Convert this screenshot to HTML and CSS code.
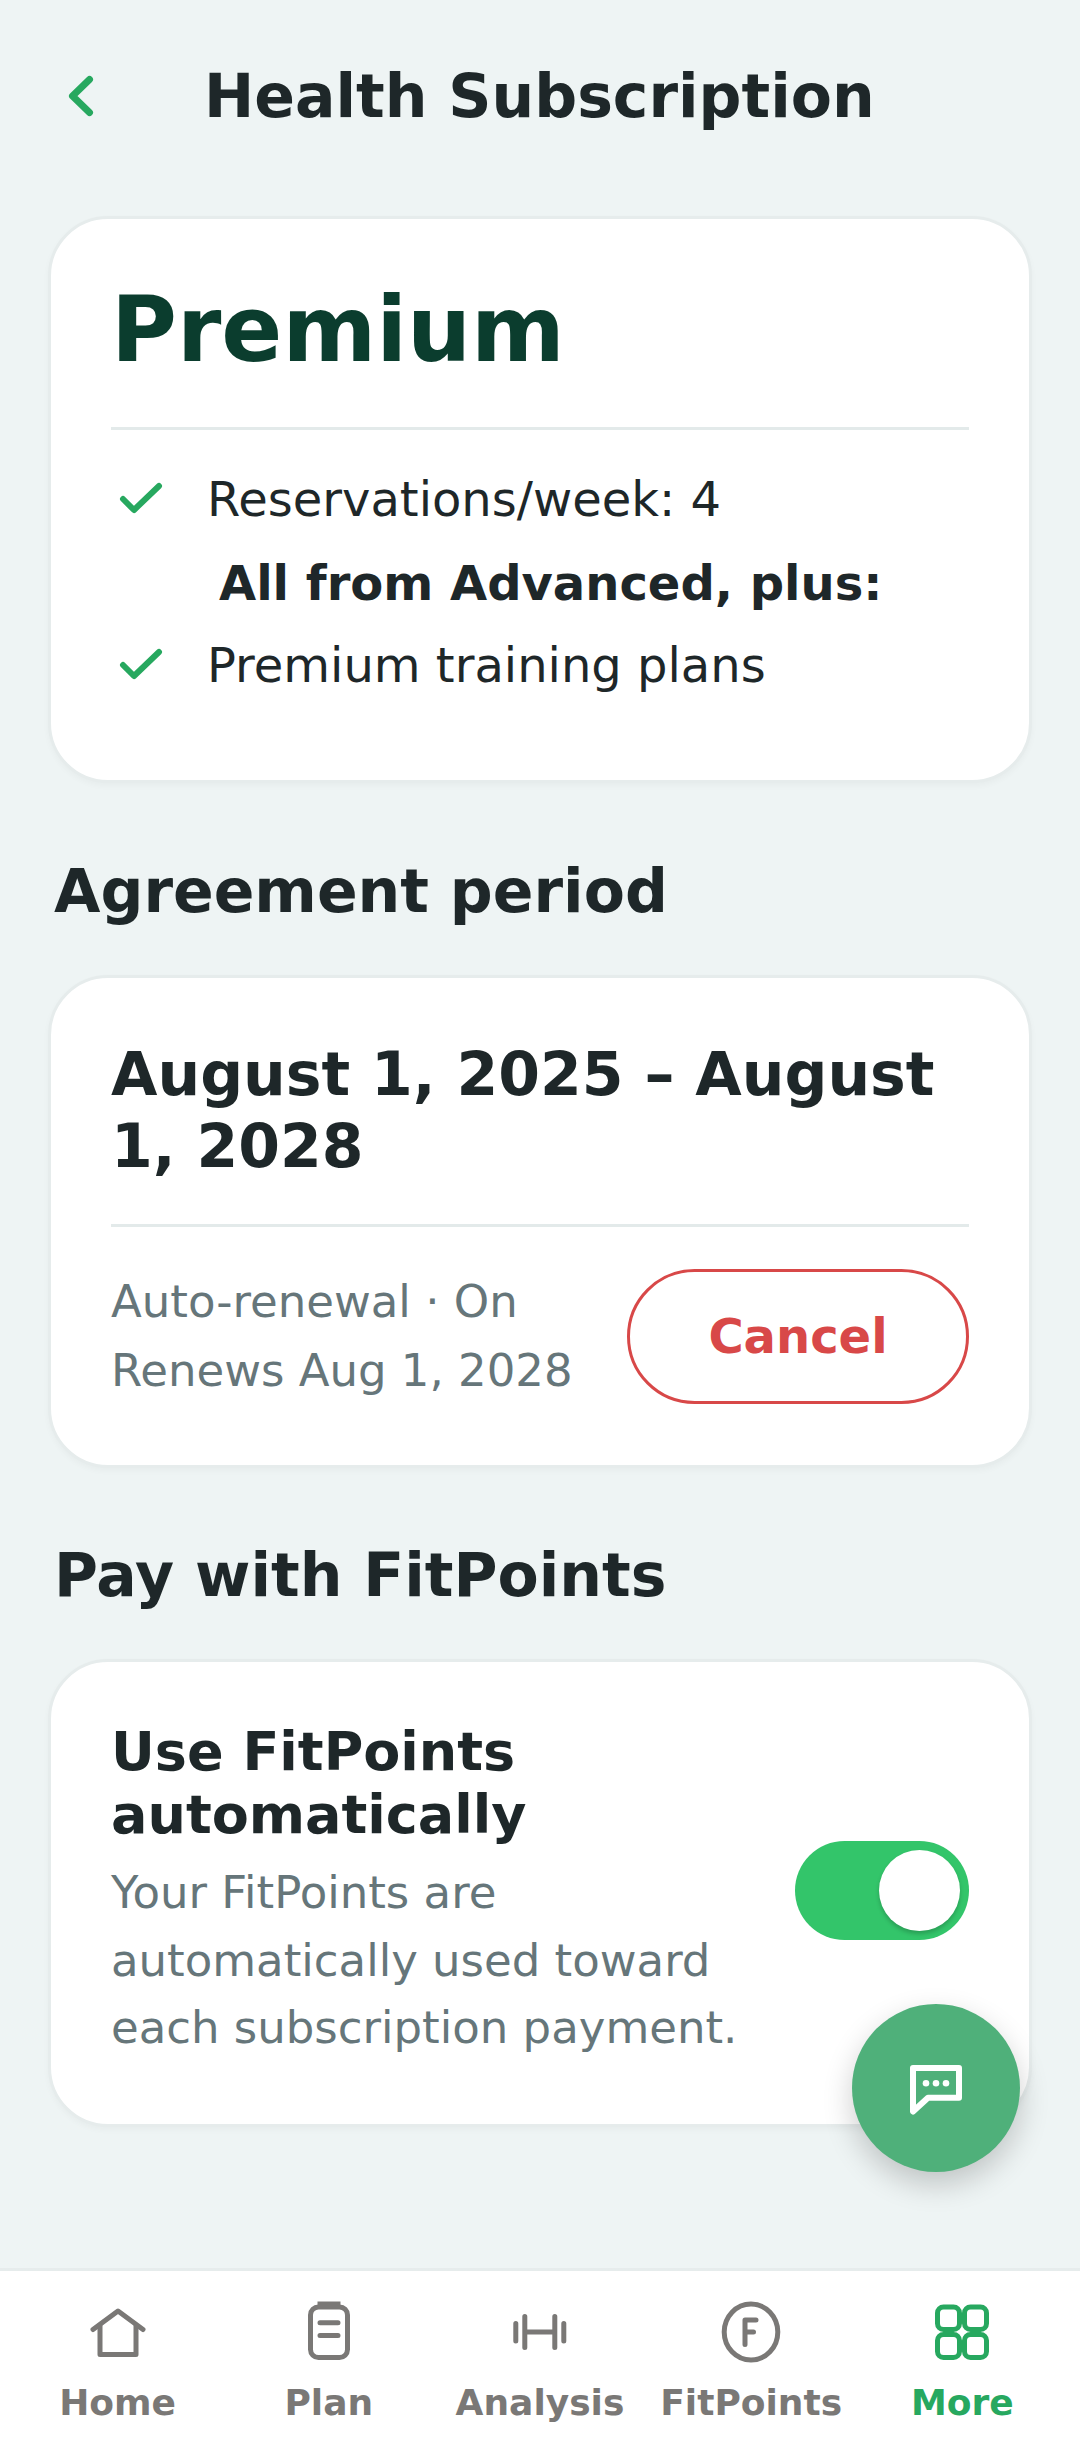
FILE: index.html
```html
<!DOCTYPE html>
<html lang="en">

<head>
    <meta charset="UTF-8">
    <meta name="viewport" content="width=device-width, initial-scale=1.0">
    <title>Health Subscription</title>
    <link rel="stylesheet" href="styles.css">
</head>

<body>
    <div class="screen">
        <main class="content">
            <header class="topbar">
                <svg class="back" viewBox="0 0 30 46">
                    <path d="M23.5 6.5 L6.5 23 L23.5 39.5" />
                </svg>
                <h1 class="page-title">Health Subscription</h1>
            </header>

            <section class="card plan-card">
                <h2 class="plan-name">Premium</h2>
                <div class="divider"></div>
                <ul class="features">
                    <li class="feature">
                        <svg class="check" viewBox="0 0 44 34"><path d="M4 17 L15 28 L40 4" /></svg>
                        <span>Reservations/week: 4</span>
                    </li>
                    <li class="feature-head">All from Advanced, plus:</li>
                    <li class="feature">
                        <svg class="check" viewBox="0 0 44 34"><path d="M4 17 L15 28 L40 4" /></svg>
                        <span>Premium training plans</span>
                    </li>
                </ul>
            </section>

            <h2 class="section-title">Agreement period</h2>
            <section class="card period-card">
                <h3 class="period-dates">August 1, 2025 – August 1, 2028</h3>
                <div class="divider"></div>
                <div class="period-row">
                    <p class="muted">Auto-renewal · On<br>Renews Aug 1, 2028</p>
                    <button class="cancel">Cancel</button>
                </div>
            </section>

            <h2 class="section-title points-title">Pay with FitPoints</h2>
            <section class="card points-card">
                <div class="points-text">
                    <h3 class="points-head">Use FitPoints automatically</h3>
                    <p class="muted">Your FitPoints are automatically used toward each subscription payment.</p>
                </div>
                <div class="toggle"><span class="knob"></span></div>
            </section>
        </main>

        <button class="fab">
            <svg viewBox="0 0 60 56">
                <path class="bubble" d="M7 8 H53 V37.7 H22 L7 51.5 Z" />
                <circle cx="20" cy="23.3" r="3.3" />
                <circle cx="30" cy="23.3" r="3.3" />
                <circle cx="40" cy="23.3" r="3.3" />
            </svg>
        </button>

        <nav class="tabs">
            <a class="tab">
                <svg viewBox="0 0 72 62">
                    <path d="M11 28.5 L36 10 L61 28.5" />
                    <path d="M18 25 V53.5 H54 V25" />
                </svg>
                <span>Home</span>
            </a>
            <a class="tab">
                <svg viewBox="0 0 72 62">
                    <rect x="17.5" y="6" width="37" height="50.5" rx="8" />
                    <path class="solid" d="M24.5 0.5 H47.5 V6 H24.5 Z" />
                    <path d="M27 21.7 H45 M27 34.4 H45" />
                </svg>
                <span>Plan</span>
            </a>
            <a class="tab">
                <svg viewBox="0 0 72 62">
                    <path d="M11.8 22.5 V40 M20.8 15.5 V46.5 M50.8 15.5 V46.5 M59.8 22.5 V40 M20.8 31 H50.8" />
                </svg>
                <span>Analysis</span>
            </a>
            <a class="tab">
                <svg viewBox="0 0 72 62">
                    <ellipse cx="36" cy="31" rx="26.8" ry="28" />
                    <path d="M30 43.5 V19 H41 M30 31 H38.5" />
                </svg>
                <span>FitPoints</span>
            </a>
            <a class="tab active">
                <svg viewBox="0 0 72 62">
                    <rect x="11.5" y="6" width="22" height="22.5" rx="6" />
                    <rect x="38.5" y="6" width="22" height="22.5" rx="6" />
                    <rect x="11.5" y="33.5" width="22" height="23" rx="6" />
                    <rect x="38.5" y="33.5" width="22" height="23" rx="6" />
                </svg>
                <span>More</span>
            </a>
        </nav>
    </div>
</body>

</html>
```

FILE: styles.css
```css
* {
    margin: 0;
    padding: 0;
    box-sizing: border-box;
    list-style: none;
}

body {
    width: 1080px;
    height: 2460px;
    overflow: hidden;
    background: #eef4f4;
    color: #1e2729;
    font-family: "DejaVu Sans", sans-serif;
}

.screen {
    position: relative;
    display: flex;
    flex-direction: column;
    height: 2460px;
}

.content {
    flex: 1;
    padding: 0 48px;
}

/* header */
.topbar {
    display: flex;
    align-items: center;
    height: 192px;
    padding-left: 18px;
    margin-bottom: 24px;
}

.back {
    width: 30px;
    height: 46px;
    margin-right: 108px;
    fill: none;
    stroke: #27a85f;
    stroke-width: 7;
    stroke-linecap: round;
    stroke-linejoin: round;
}

.page-title {
    font-size: 60px;
    line-height: 72px;
    font-weight: 700;
    white-space: nowrap;
}

/* cards */
.card {
    background: #fff;
    border: 3px solid #e6ecec;
    border-radius: 60px;
    padding: 0 60px;
    box-shadow: 0 3px 6px rgba(0, 0, 0, 0.03);
}

.divider {
    height: 3px;
    background: #e3eaea;
}

.muted {
    color: #66767a;
    font-size: 45px;
}

.plan-card {
    height: 567px;
    padding-top: 57px;
}

.plan-name {
    font-size: 90px;
    line-height: 108px;
    font-weight: 700;
    color: #0b3d2e;
    margin-bottom: 43px;
}

.features {
    padding-top: 28px;
}

.feature {
    display: flex;
    align-items: center;
    font-size: 48px;
    line-height: 82px;
}

.check {
    width: 44px;
    height: 34px;
    margin: 0 44px 0 8px;
    flex-shrink: 0;
    fill: none;
    stroke: #27a85f;
    stroke-width: 6;
    stroke-linecap: round;
    stroke-linejoin: round;
}

.feature-head {
    font-size: 48px;
    line-height: 82px;
    font-weight: 700;
    padding-left: 108px;
    margin-top: 2px;
}

.section-title {
    font-size: 60px;
    line-height: 72px;
    font-weight: 700;
    margin: 72px 0 48px 6px;
}

.points-title {
    margin-top: 71px;
    margin-bottom: 48px;
}

.period-card {
    height: 493px;
    padding-top: 60px;
}

.period-dates {
    font-size: 60px;
    line-height: 72px;
    font-weight: 700;
    margin-bottom: 42px;
}

.period-row {
    display: flex;
    align-items: center;
    justify-content: space-between;
    padding-top: 40px;
}

.period-row .muted {
    line-height: 69px;
}

.cancel {
    width: 342px;
    height: 135px;
    border: 3px solid #d84848;
    border-radius: 68px;
    background: #fff;
    color: #d84848;
    font-family: inherit;
    font-size: 48px;
    font-weight: 700;
}

.points-card {
    display: flex;
    align-items: center;
    justify-content: space-between;
    height: 468px;
}

.points-text {
    width: 640px;
    padding-bottom: 4px;
}

.points-head {
    font-size: 54px;
    line-height: 63px;
    font-weight: 700;
    margin-bottom: 13px;
}

.points-text .muted {
    line-height: 67.5px;
}

.toggle {
    display: flex;
    justify-content: flex-end;
    align-items: center;
    width: 174px;
    height: 99px;
    padding-right: 9px;
    margin-bottom: 5px;
    border-radius: 50px;
    background: #33c56a;
}

.knob {
    width: 81px;
    height: 81px;
    border-radius: 50%;
    background: #fff;
    box-shadow: 0 3px 4px rgba(0, 0, 0, 0.2);
}

/* floating chat button */
.fab {
    position: absolute;
    right: 60px;
    bottom: 288px;
    display: flex;
    align-items: center;
    justify-content: center;
    width: 168px;
    height: 168px;
    border: none;
    border-radius: 50%;
    background: #4fb07a;
    box-shadow: 0 12px 30px rgba(0, 0, 0, 0.2);
}

.fab svg {
    width: 60px;
    height: 56px;
    fill: #fff;
}

.fab .bubble {
    fill: none;
    stroke: #fff;
    stroke-width: 6;
    stroke-linejoin: round;
}

/* bottom tabs */
.tabs {
    display: grid;
    grid-template-columns: repeat(5, 1fr);
    height: 192px;
    padding: 30px 12px 0;
    background: #fff;
    border-top: 3px solid #e6ecec;
}

.tab {
    display: flex;
    flex-direction: column;
    align-items: center;
    color: #7a7876;
    font-size: 36px;
    font-weight: 700;
    line-height: 40px;
}

.tab svg {
    width: 72px;
    height: 62px;
    margin-bottom: 20px;
    fill: none;
    stroke: currentColor;
    stroke-width: 5;
    stroke-linecap: round;
    stroke-linejoin: round;
}

.tab .solid {
    fill: currentColor;
    stroke: none;
}

.tab.active {
    color: #27a85f;
}
```
